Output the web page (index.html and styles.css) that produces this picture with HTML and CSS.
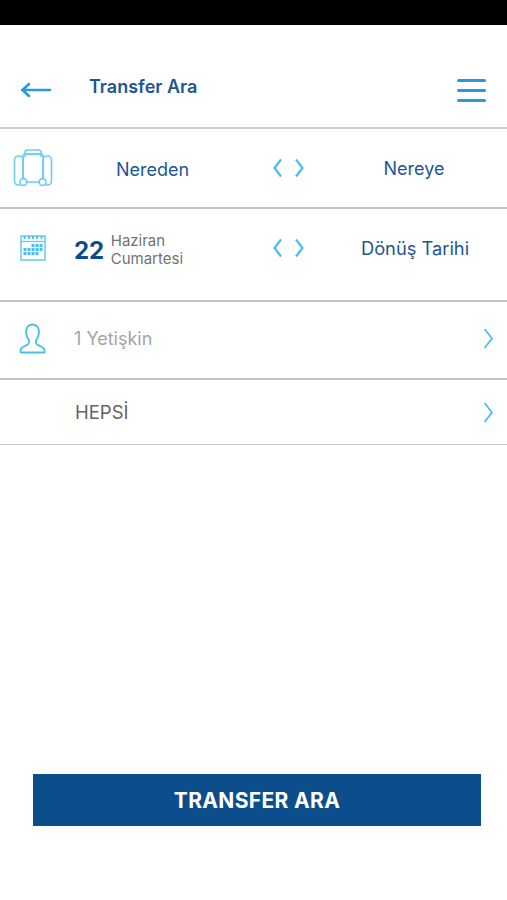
FILE: index.html
```html
<!DOCTYPE html>
<html lang="tr">
<head>
    <meta charset="UTF-8">
    <meta name="viewport" content="width=device-width, initial-scale=1.0">
    <title>Transfer Ara</title>
    <link rel="stylesheet" href="styles.css">
</head>
<body>
    <div class="status-bar"></div>
    <div class="header">
        <svg class="back-icon" width="32" height="16" viewBox="0 0 32 16">
            <path d="M2 8H30M9 2L2.500 8L9 14" fill="none" stroke="#2a9ad6" stroke-width="2.500" stroke-linecap="round" stroke-linejoin="round"/>
        </svg>
        <div class="header-title">Transfer Ara</div>
        <div class="menu-icon">
            <span></span>
            <span></span>
            <span></span>
        </div>
    </div>

    <div class="row row-route">
        <div class="row-icon">
            <svg width="40" height="38" viewBox="0 0 40 38" fill="none" stroke="#6ccdf3" stroke-width="1.600">
                <rect x="1.500" y="7" width="8.500" height="29" rx="4"/>
                <rect x="30" y="7" width="8.500" height="29" rx="4"/>
                <rect x="10" y="5" width="20" height="28" rx="2.500"/>
                <path d="M12 8V3.500C12 2 13 1 14.500 1H25.500C27 1 28 2 28 3.500V8"/>
                <path d="M12 5H28"/>
                <circle cx="10.500" cy="33" r="3.400" fill="#fff"/>
                <circle cx="29.500" cy="33" r="3.400" fill="#fff"/>
            </svg>
        </div>
        <div class="col-from col-origin">Nereden</div>
        <div class="col-swap">
            <svg width="32" height="20" viewBox="0 0 32 20" fill="none" stroke="#49bdec" stroke-width="2.200">
                <path d="M8 1.500L1.500 10L8 18.500"/>
                <path d="M23 1.500L29.500 10L23 18.500"/>
            </svg>
        </div>
        <div class="col-to">Nereye</div>
    </div>

    <div class="row row-date">
        <div class="row-icon">
            <svg width="26" height="26" viewBox="0 0 26 26" fill="none">
                <rect x="1" y="1" width="24" height="24" stroke="#6ccdf3" stroke-width="1.600"/>
                <path d="M1 6.500H25" stroke="#6ccdf3" stroke-width="1.400"/>
                <path d="M4.500 1V4M9 1V4M13 1V4M17 1V4M21.500 1V4" stroke="#49bdec" stroke-width="1.800"/>
                <g fill="#49bdec">
                    <rect x="11.500" y="9" width="3" height="3"/>
                    <rect x="15.500" y="9" width="3" height="3"/>
                    <rect x="19.500" y="9" width="3" height="3"/>
                    <rect x="3.500" y="13" width="3" height="3"/>
                    <rect x="7.500" y="13" width="3" height="3"/>
                    <rect x="11.500" y="13" width="3" height="3"/>
                    <rect x="15.500" y="13" width="3" height="3"/>
                    <rect x="19.500" y="13" width="3" height="3"/>
                    <rect x="3.500" y="17" width="3" height="3"/>
                    <rect x="7.500" y="17" width="3" height="3"/>
                    <rect x="11.500" y="17" width="3" height="3"/>
                    <rect x="15.500" y="17" width="3" height="3"/>
                </g>
            </svg>
        </div>
        <div class="col-from date-box">
            <div class="date-day">22</div>
            <div class="date-text">
                <div>Haziran</div>
                <div>Cumartesi</div>
            </div>
        </div>
        <div class="col-swap">
            <svg width="32" height="20" viewBox="0 0 32 20" fill="none" stroke="#49bdec" stroke-width="2.200">
                <path d="M8 1.500L1.500 10L8 18.500"/>
                <path d="M23 1.500L29.500 10L23 18.500"/>
            </svg>
        </div>
        <div class="col-to col-return">Dönüş Tarihi</div>
    </div>

    <div class="row row-people">
        <div class="row-icon">
            <svg width="27" height="31" viewBox="0 0 27 31" fill="none" stroke="#49bdec" stroke-width="1.800" stroke-linejoin="round">
                <path d="M13.500 1.500C9 1.500 7 5 7 9C7 13 8.500 15.500 10 17.500V20C10 21.500 8 22 5 23.500C2.500 24.500 1.500 25.500 1.500 27.500V29.500H25.500V27.500C25.500 25.500 24.500 24.500 22 23.500C19 22 17 21.500 17 20V17.500C18.500 15.500 20 13 20 9C20 5 18 1.500 13.500 1.500Z"/>
            </svg>
        </div>
        <div class="row-label label-light">1 Yetişkin</div>
        <svg class="row-arrow" width="11" height="21" viewBox="0 0 11 21" fill="none" stroke="#49bdec" stroke-width="1.800">
            <path d="M1.500 1L9 10.500L1.500 20"/>
        </svg>
    </div>

    <div class="row row-type">
        <div class="row-icon"></div>
        <div class="row-label label-type">HEPSİ</div>
        <svg class="row-arrow" width="11" height="21" viewBox="0 0 11 21" fill="none" stroke="#49bdec" stroke-width="1.800">
            <path d="M1.500 1L9 10.500L1.500 20"/>
        </svg>
    </div>

    <div class="footer">
        <button class="btn" type="button">TRANSFER ARA</button>
    </div>
</body>
</html>
```
FILE: styles.css
```css
html, body {
    margin: 0;
    padding: 0;
}
body {
    font-family: Inter, "Liberation Sans", sans-serif;
    background-color: white;
    display: flex;
    flex-direction: column;
    min-height: 100vh;
    overflow: hidden;
}
.status-bar {
    height: 25px;
    background-color: black;
}
.header {
    height: 102px;
    display: flex;
    align-items: center;
    padding-left: 20px;
    padding-right: 21px;
    border-bottom: 2px solid #cccccc;
}
.back-icon {
    margin-top: 28px;
}
.header-title {
    margin-left: 37px;
    margin-top: 20px;
    color: #1e5692;
    font-size: 18px;
    font-weight: 600;
    flex: 1;
}
.menu-icon {
    margin-top: 29px;
    display: flex;
    flex-direction: column;
    gap: 6.500px;
}
.menu-icon span {
    display: block;
    width: 29px;
    height: 3.500px;
    border-radius: 2px;
    background-color: #2a9ad6;
}
.row {
    display: flex;
    align-items: center;
    border-bottom: 1px solid #c4c4c4;
}
.row-route {
    height: 78px;
    border-bottom-width: 2px;
}
.row-date {
    height: 77px;
    padding-bottom: 14px;
    border-bottom-width: 2px;
}
.row-people {
    height: 72px;
    padding-bottom: 4px;
    border-bottom-width: 2px;
}
.row-type {
    height: 64px;
}
.row-icon {
    width: 65px;
    flex-shrink: 0;
    display: flex;
    justify-content: center;
}
.col-from {
    width: 175px;
    text-align: center;
    color: #1e5692;
    font-size: 18px;
}
.col-origin {
    padding-top: 2px;
}
.col-swap {
    width: 98px;
    display: flex;
    justify-content: center;
}
.col-to {
    width: 152px;
    text-align: center;
    color: #1e5692;
    font-size: 18px;
}
.col-return {
    padding-left: 1px;
    font-size: 18.300px;
}
.date-box {
    display: flex;
    align-items: center;
    padding-left: 9px;
    padding-top: 5px;
    box-sizing: border-box;
    text-align: left;
}
.date-day {
    color: #0d4c8a;
    font-size: 24px;
    font-weight: 700;
}
.date-text {
    margin-left: 6.500px;
    color: #6f7276;
    font-size: 15px;
    line-height: 18px;
}
.row-label {
    flex: 1;
    margin-left: 9px;
    color: #626466;
    font-size: 18px;
}
.label-light {
    color: #a3a5a8;
}
.label-type {
    margin-left: 10px;
    font-size: 18.500px;
}
.row-arrow {
    margin-right: 13px;
}
.footer {
    margin-top: auto;
    padding: 0 26px 74px 33px;
}
.btn {
    display: block;
    width: 100%;
    height: 52px;
    border: none;
    padding: 0;
    background-color: #0c4e8b;
    color: white;
    font-family: inherit;
    font-size: 21px;
    font-weight: 700;
    letter-spacing: 0.350px;
    text-align: center;
}
```
